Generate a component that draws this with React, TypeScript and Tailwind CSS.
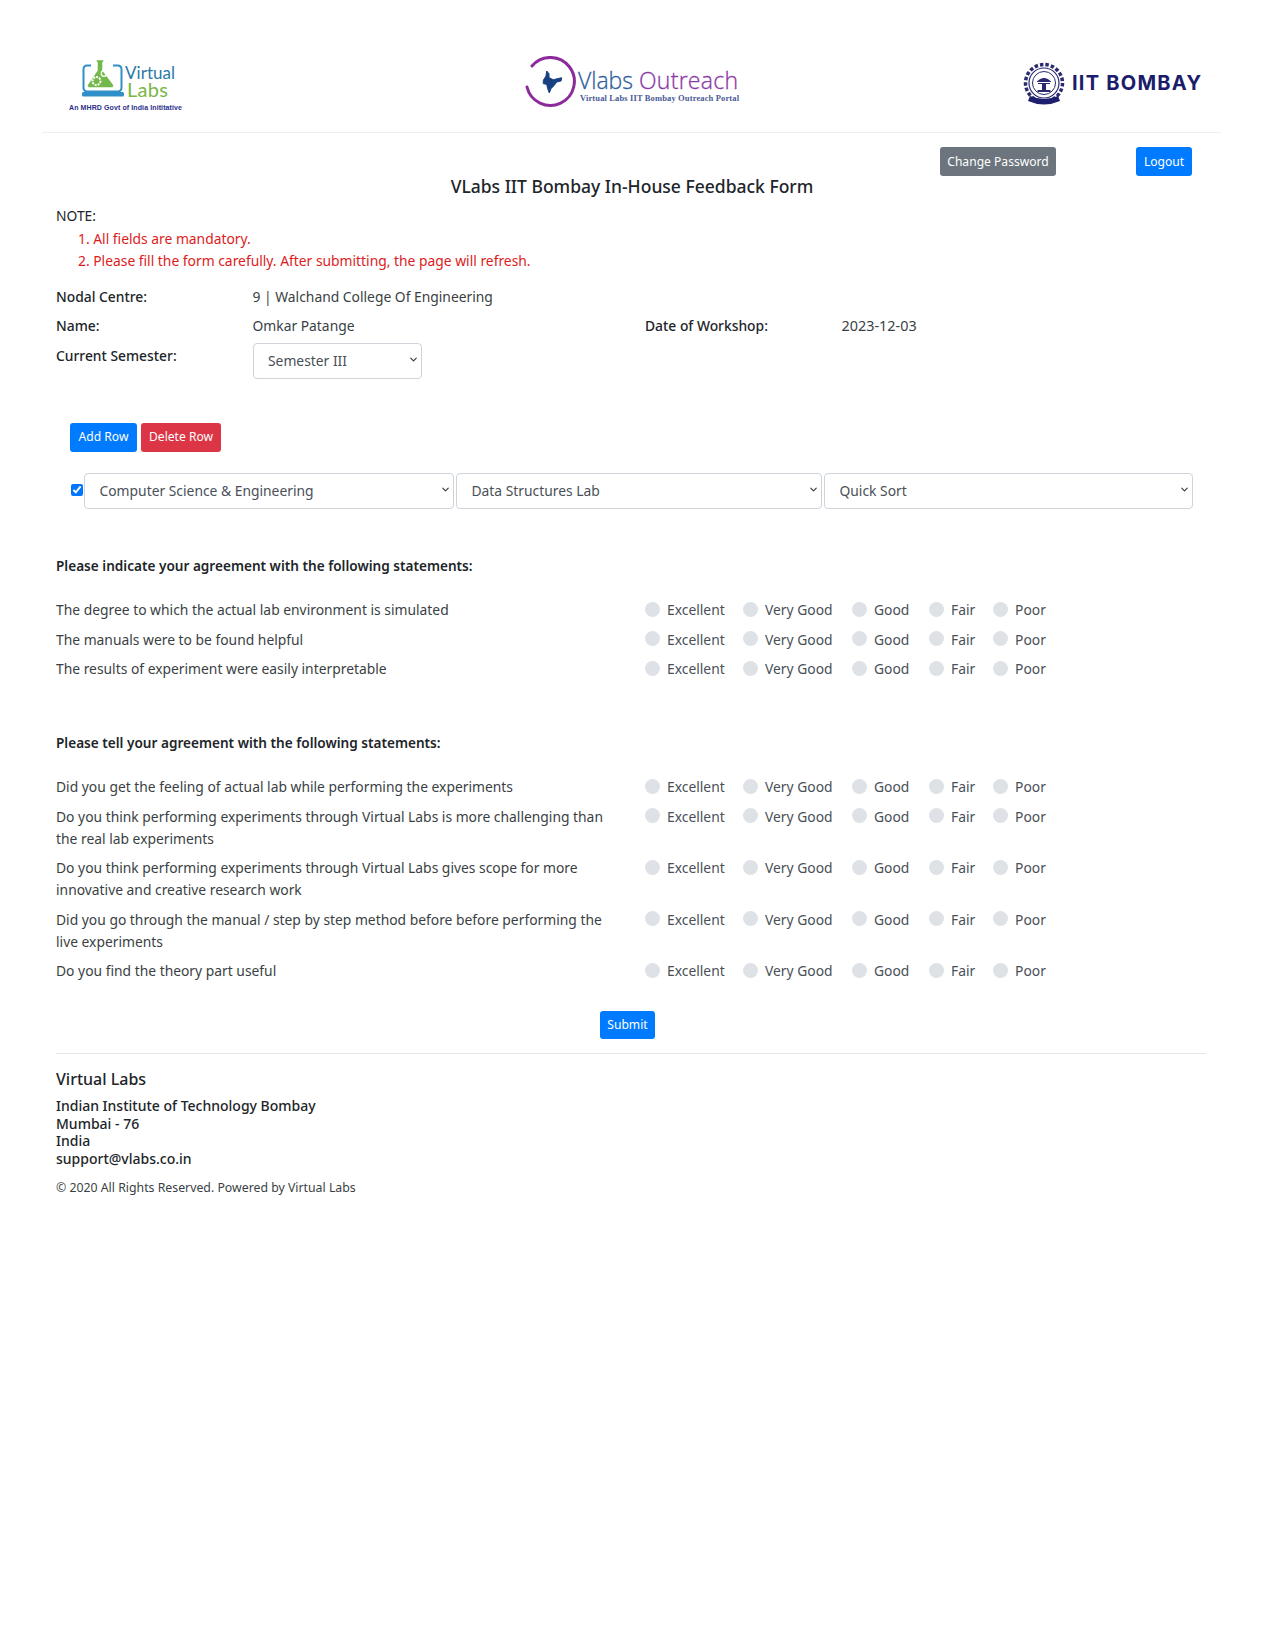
import React from "react";
import { ChevronDown } from "lucide-react";

const OPTIONS: [string, string][] = [
  ["Excellent", "w-[98px]"],
  ["Very Good", "w-[109px]"],
  ["Good", "w-[77px]"],
  ["Fair", "w-[64px]"],
  ["Poor", "w-[60px]"],
];

function Radios() {
  return (
    <div className="flex shrink-0">
      {OPTIONS.map(([o, w]) => (
        <label key={o} className={`flex items-start ${w}`}>
          <input type="radio" className="mt-[2.5px] h-[15px] w-[15px] shrink-0 appearance-none rounded-full bg-[#dee2e6]" />
          <span className="ml-[7px] text-[#495057]">{o}</span>
        </label>
      ))}
    </div>
  );
}

function Question({ text, last }: { text: string; last?: boolean }) {
  return (
    <div className={`flex leading-[22px] ${last ? "" : "mb-[7.5px]"}`}>
      <div className="w-[589px] shrink-0 pr-[29px] text-[#3a3f44]">{text}</div>
      <Radios />
    </div>
  );
}

function Select({ value, className }: { value: string; className: string }) {
  return (
    <div className={`relative ${className}`}>
      <select className="h-[36px] w-full appearance-none rounded-[4px] border border-[#ced4da] bg-white pl-[14.5px] text-[#495057] outline-none">
        <option>{value}</option>
      </select>
      <ChevronDown size={11} strokeWidth={2.5} className="pointer-events-none absolute right-[3px] top-[11px] text-[#343a40]" />
    </div>
  );
}

function VirtualLabsLogo() {
  return (
    <svg width="124" height="58" viewBox="0 0 124 58" className="block shrink-0">
      <path d="M22 6.500h-4a3.500 3.500 0 0 0-3.500 3.500v19a3.500 3.500 0 0 0 3.500 3.500h31a3.500 3.500 0 0 0 3.500-3.500V10a3.500 3.500 0 0 0-3.500-3.500h-5" fill="none" stroke="#2f8fc8" strokeWidth="2" />
      <rect x="13" y="33" width="42" height="4.500" rx="1.500" fill="#2f8fc8" />
      <path d="M27.500 1h7v2h-1v8.500l10.500 14q1.500 3-2 3H21q-3.500 0-2-3l9.500-14V3h-1z" fill="#72b84a" stroke="#fff" strokeWidth="0.500" />
      <circle cx="27.500" cy="22" r="4" fill="none" stroke="#fff" strokeWidth="2" strokeDasharray="2 1" />
      <circle cx="35" cy="14.500" r="2.800" fill="none" stroke="#fff" strokeWidth="1.300" />
      <text x="56" y="19.500" fontFamily="Lato, sans-serif" fontSize="17" fill="#2b78a8" textLength="50">Virtual</text>
      <text x="58" y="37.500" fontFamily="Lato, sans-serif" fontSize="20" fill="#7ab648" textLength="41">Labs</text>
      <text x="0" y="50.500" fontFamily="Liberation Sans, sans-serif" fontSize="7" fontWeight="700" fill="#2b2f8a" textLength="113">An MHRD Govt of India Inititative</text>
    </svg>
  );
}

function OutreachLogo() {
  return (
    <svg width="218" height="54" viewBox="0 0 218 54" className="block shrink-0">
      <path d="M7 10A24 24 0 1 1 2 31" fill="none" stroke="#8c2a9c" strokeWidth="3" strokeLinecap="round" />
      <path d="M21.700 15L24 17.700V21.700L28.300 23.700L36.700 21.700L36 25L31.700 26L29.300 29.300L26 32.700L24.300 37L22.700 32.700L21.700 28.300L18.300 27.700V24.300L21 20z" fill="#16407f" stroke="#16407f" strokeWidth="1" strokeLinejoin="round" />
      <text x="53" y="33" fontFamily="Open Sans, sans-serif" fontSize="23" fontWeight="300" stroke="#2e5f9e" strokeWidth="0.300" fill="#2e5f9e" textLength="55">Vlabs</text>
      <text x="114" y="33" fontFamily="Open Sans, sans-serif" fontSize="23" fontWeight="300" stroke="#8b3aa5" strokeWidth="0.300" fill="#8b3aa5" textLength="99">Outreach</text>
      <text x="55" y="45" fontFamily="Liberation Serif, serif" fontSize="8.500" fontWeight="700" fill="#4a5a96" textLength="159">Virtual Labs IIT Bombay Outreach Portal</text>
    </svg>
  );
}

function IITLogo() {
  return (
    <svg width="180" height="46" viewBox="0 0 180 46" className="block shrink-0">
      <circle cx="21" cy="21" r="18.500" fill="none" stroke="#2a2a70" strokeWidth="3.500" strokeDasharray="3.500 2" />
      <circle cx="21" cy="21" r="15" fill="none" stroke="#2a2a70" strokeWidth="1.200" />
      <circle cx="21" cy="21" r="11.500" fill="none" stroke="#2a2a70" strokeWidth="1" />
      <path d="M13.500 20q7.500-8 15 0zM15 21h12v1H15zM19 22h4v6h-4zM14.500 28h13v2h-13z" fill="#2a2a70" />
      <path d="M7 34q14 6 28 0l2 5q-16 7-32 0z" fill="#1e1e6e" />
      <text x="49" y="28" fontFamily="Inter, sans-serif" fontSize="20" fontWeight="700" fill="#1c1c6c" textLength="129">IIT BOMBAY</text>
    </svg>
  );
}

export default function App() {
  return (
    <div className="min-h-[1650px] bg-white text-[13.85px] leading-[22px] text-[#212529] [font-family:'Noto_Sans',sans-serif]">
      <header className="ml-[42px] mr-[54px] flex h-[133px] items-start border-b border-[#eeeeee] pl-[27px] pr-[18px] pt-[56px]">
        <div className="mt-[3px]"><VirtualLabsLogo /></div>
        <div className="ml-[332px]"><OutreachLogo /></div>
        <div className="ml-auto mt-[6px]"><IITLogo /></div>
      </header>

      <main className="px-[56px]">
        <div className="box-content flex h-[29px] justify-end pr-[27px] pt-[14px]">
          <button className="mr-[80px] h-[29px] w-[116px] rounded-[3px] bg-[#6c757d] text-[12.1px] text-white">Change Password</button>
          <button className="h-[29px] w-[56px] rounded-[3px] bg-[#007bff] text-[12.1px] text-white">Logout</button>
        </div>

        <h1 className="mt-[-2px] text-center text-[17.500px] font-medium leading-[24px] [text-indent:-11px]">VLabs IIT Bombay In-House Feedback Form</h1>

        <div className="mt-[7px]">NOTE:</div>
        <ol className="mt-[1px] pl-[22px] text-[#dc1c1c]">
          <li>1. All fields are mandatory.</li>
          <li>2. Please fill the form carefully. After submitting, the page will refresh.</li>
        </ol>

        <div className="mt-[14px] flex font-medium"><span className="w-[196.500px]">Nodal Centre:</span><span className="font-normal text-[#3a3f44]">9 | Walchand College Of Engineering</span></div>
        <div className="mt-[7px] flex font-medium">
          <span className="w-[196.500px]">Name:</span><span className="w-[392.500px] font-normal text-[#3a3f44]">Omkar Patange</span>
          <span className="w-[196.500px]">Date of Workshop:</span><span className="text-[14.4px] font-normal text-[#3a3f44]">2023-12-03</span>
        </div>
        <div className="mt-[8px] flex items-start font-medium">
          <span className="w-[196.500px]">Current Semester:</span>
          <Select value="Semester III" className="-mt-[2.5px] w-[169px] font-normal" />
        </div>

        <div className="mt-[44px] flex gap-[4px] pl-[14px]">
          <button className="h-[29px] w-[67px] rounded-[3px] bg-[#007bff] text-[12.1px] text-white">Add Row</button>
          <button className="h-[29px] w-[80px] rounded-[3px] bg-[#dc3545] text-[12.1px] text-white">Delete Row</button>
        </div>

        <div className="mt-[21px] flex items-center pl-[15px]">
          <input type="checkbox" defaultChecked className="mb-[1px] mr-[1px] h-[12px] w-[12px] shrink-0 accent-[#0075ff]" />
          <Select value="Computer Science & Engineering" className="w-[370px] shrink-0" />
          <Select value="Data Structures Lab" className="ml-[2px] w-[366px] shrink-0" />
          <Select value="Quick Sort" className="ml-[2px] w-[369px] shrink-0" />
        </div>

        <h2 className="mt-[46px] text-[13.6px] font-semibold">Please indicate your agreement with the following statements:</h2>
        <div className="mt-[22.500px]">
          <Question text="The degree to which the actual lab environment is simulated" />
          <Question text="The manuals were to be found helpful" />
          <Question text="The results of experiment were easily interpretable" />
        </div>

        <h2 className="mt-[51.500px] text-[13.6px] font-semibold">Please tell your agreement with the following statements:</h2>
        <div className="mt-[22.500px]">
          <Question text="Did you get the feeling of actual lab while performing the experiments" />
          <Question text="Do you think performing experiments through Virtual Labs is more challenging than the real lab experiments" />
          <Question text="Do you think performing experiments through Virtual Labs gives scope for more innovative and creative research work" />
          <Question text="Did you go through the manual / step by step method before before performing the live experiments" />
          <Question text="Do you find the theory part useful" last />
        </div>

        <div className="mt-[29px] flex justify-center pr-[20px]">
          <button className="h-[28px] w-[55px] rounded-[3px] bg-[#007bff] text-[12.1px] text-white">Submit</button>
        </div>

        <hr className="mt-[14px] w-[1150px] border-[#e5e5e5]" />

        <footer className="mt-[13px]">
          <div className="text-[16px] font-medium leading-[24px]">Virtual Labs</div>
          <address className="mt-[6px] text-[14px] font-medium not-italic leading-[17.500px]">
            <div>Indian Institute of Technology Bombay</div>
            <div>Mumbai - 76</div>
            <div>India</div>
            <div>support@vlabs.co.in</div>
          </address>
          <div className="mt-[10px] text-[12.3px] text-[#3a3f44]">© 2020 All Rights Reserved. Powered by Virtual Labs</div>
        </footer>
      </main>
    </div>
  );
}
